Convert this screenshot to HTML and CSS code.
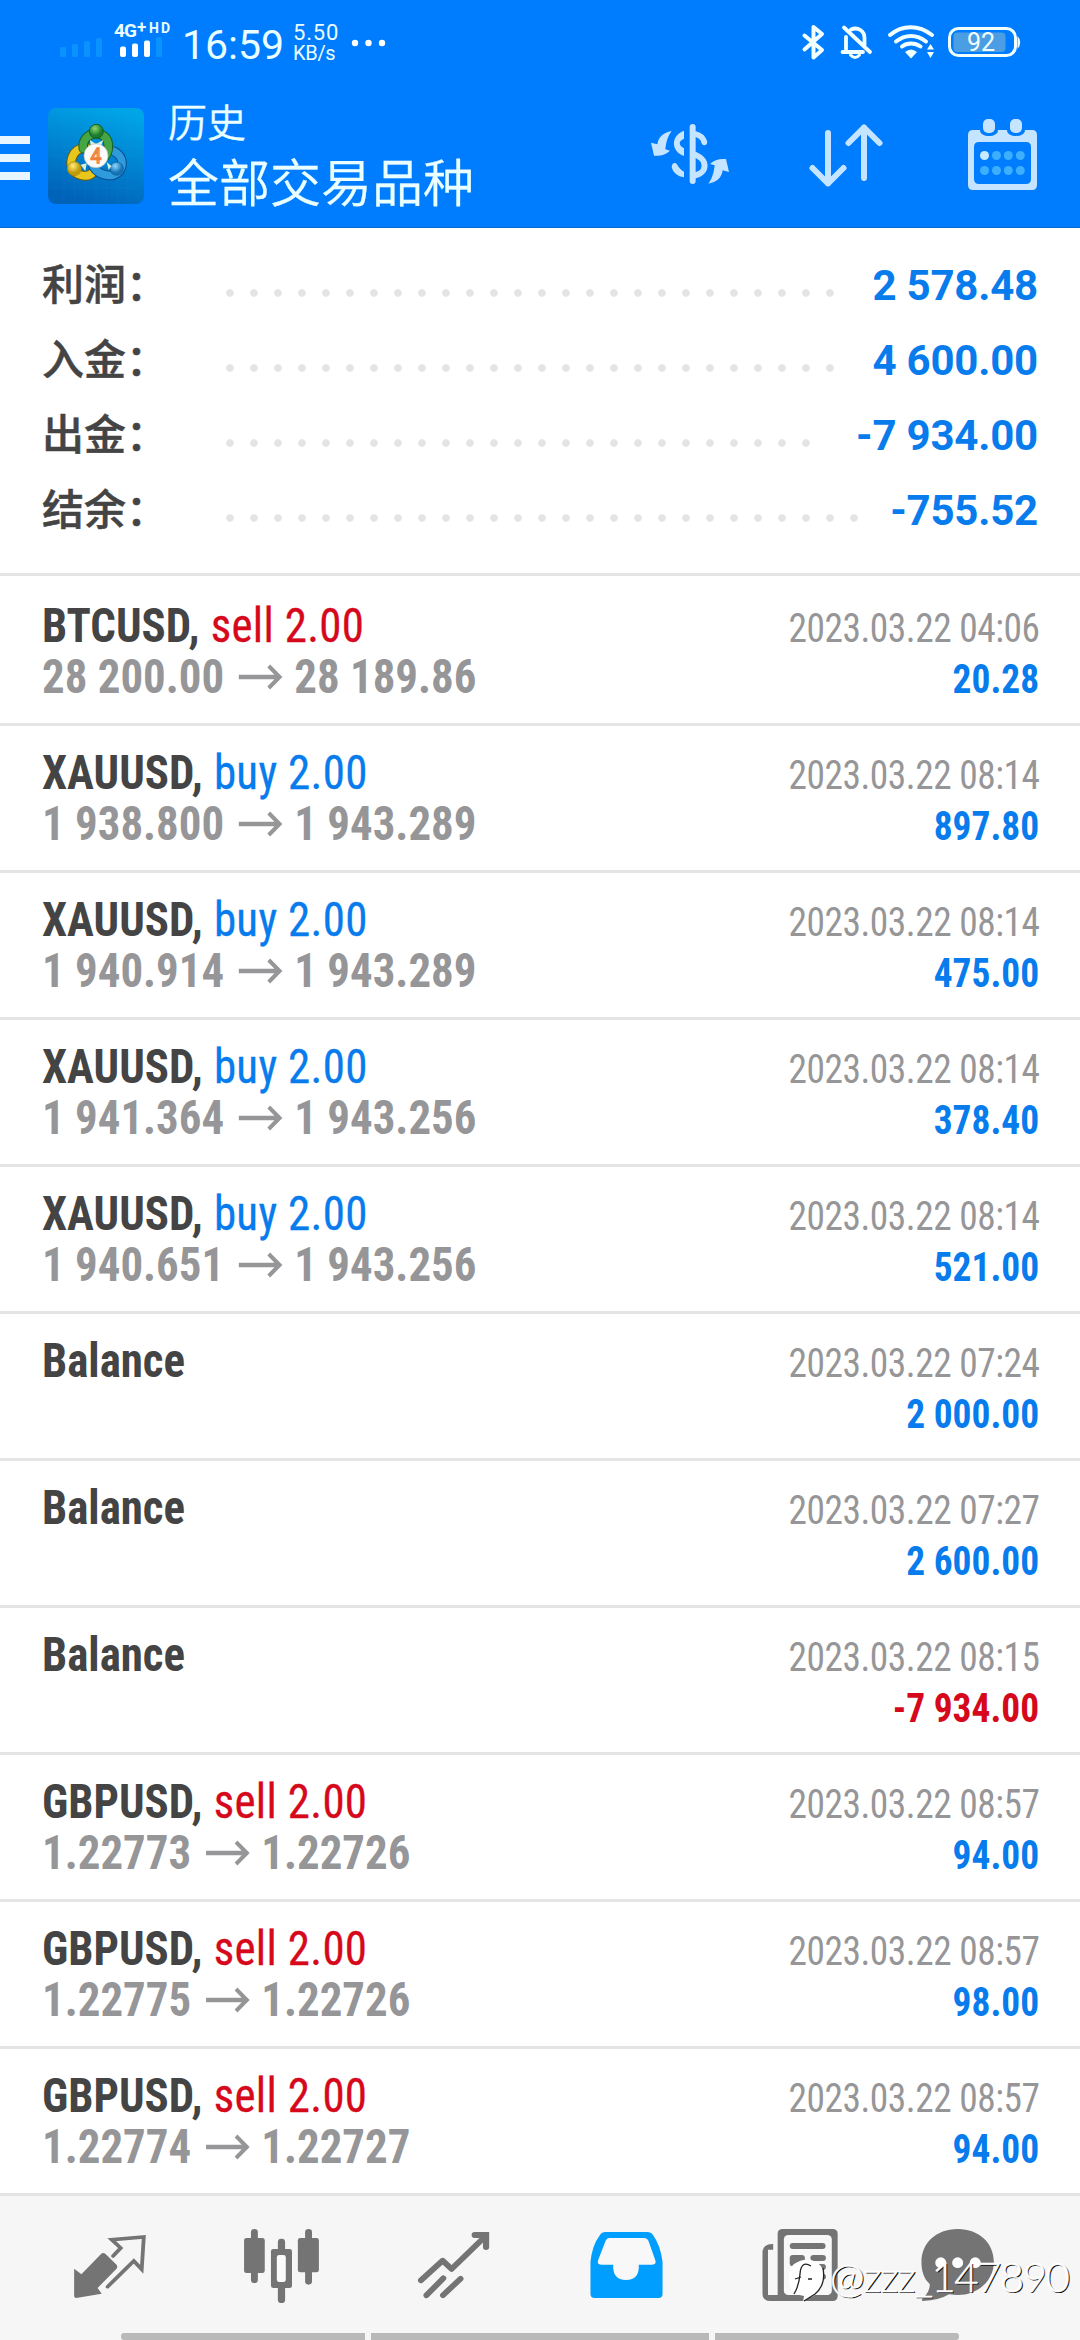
FILE: index.html
```
<!DOCTYPE html>
<html lang="zh-CN">
<head>
<meta charset="utf-8">
<title>历史</title>
<link rel="stylesheet" href="styles.css">
</head>
<body>
<svg class="defs" width="0" height="0">
  <symbol id="arrow" viewBox="0 0 46 26"><path d="M0 13H43M32 2L43.500 13L32 24" fill="none" stroke="#969698" stroke-width="4.300"/></symbol>
</svg>
<div class="screen">
<header class="header">
  <div class="status">
    <svg class="signal" width="120" height="50" viewBox="56 15 120 50">
      <g fill="#0a92ff"><rect x="60" y="47" width="6" height="10" rx="1.500"/><rect x="72" y="44" width="6" height="13" rx="1.500"/><rect x="84" y="41" width="6" height="16" rx="1.500"/><rect x="96" y="38" width="6" height="19" rx="1.500"/><rect x="156" y="37" width="6" height="20" rx="1.500"/></g>
      <g fill="#fff"><rect x="120" y="46.500" width="6" height="10.500" rx="2"/><rect x="132" y="43.500" width="6" height="13.500" rx="2"/><rect x="144" y="40.500" width="6" height="16.500" rx="2"/></g>
      <g class="net" fill="#eaffff"><text x="114" y="37" font-size="19" textLength="23">4G</text><text x="137" y="33" font-size="17">+</text><text x="149" y="32.500" font-size="14" textLength="21">HD</text></g>
    </svg>
    <span class="clock">16:59</span>
    <span class="speed"><span>5.50</span><span class="unit">KB/s</span></span>
    <svg class="more" width="36" height="8" viewBox="0 0 36 8"><g fill="#fff"><circle cx="4" cy="4" r="3.200"/><circle cx="17.500" cy="4" r="3.200"/><circle cx="31" cy="4" r="3.200"/></g></svg>
    <svg class="system" width="224" height="40" viewBox="800 22 224 40">
      <g fill="none" stroke="#f2ffff" stroke-linecap="round" stroke-linejoin="round">
        <path stroke-width="4" d="M804.500 35.500L822 50L813.500 57.500V27L822 34L804.500 49.500"/>
        <path stroke-width="3.800" d="M846 37V51M842.500 52H863M851 29.500C858 26.500 864.500 31 864.500 38V45M844 27.500L870 52"/>
        <path stroke-width="3" d="M850.500 55Q855 60 859.500 55"/>
        <path stroke-width="4" d="M890 35C902 24.500 919 24.500 932 35M896 41.500C905 34 917 34 926 41.500M902 46.500C907 42.500 915 42.500 920.500 46.500"/>
        <rect x="949.500" y="28.500" width="66" height="27" rx="9" stroke-width="3"/>
      </g>
      <path fill="#f2ffff" d="M905 52Q911 47 917 52L911 58.500ZM927 49.500L930.500 44L934 49.500ZM927 52L930.500 58L934 52ZM1017.500 36Q1023 42 1017.500 49Z"/>
      <rect x="953.500" y="32.500" width="52" height="19.500" rx="4" fill="#4c9ee4"/>
      <text x="967" y="51.300" font-size="25" fill="#f2ffff">92</text>
    </svg>
  </div>
  <div class="bar">
    <div class="menu"><i></i><i></i><i></i></div>
    <svg class="logo" width="96" height="96" viewBox="24 24 288 288">
      <defs>
        <linearGradient id="bg" x1=".7" y1="0" x2=".4" y2="1"><stop offset="0" stop-color="#00a5e8"/><stop offset=".5" stop-color="#0083d2"/><stop offset="1" stop-color="#0062b8"/></linearGradient>
        <radialGradient id="gr" cx=".4" cy=".3"><stop offset="0" stop-color="#8fd870"/><stop offset="1" stop-color="#1c7c2c"/></radialGradient>
        <radialGradient id="ye" cx=".4" cy=".3"><stop offset="0" stop-color="#fff07a"/><stop offset="1" stop-color="#c09a08"/></radialGradient>
        <radialGradient id="bl" cx=".4" cy=".3"><stop offset="0" stop-color="#8fd8ff"/><stop offset="1" stop-color="#1673b8"/></radialGradient>
      </defs>
      <rect x="24" y="24" width="288" height="288" rx="24" fill="url(#bg)"/>
      <path d="M72 24V312M104 24V312M136 24V312M168 24V312M200 24V312M232 24V312M264 24V312M24 72H312M24 104H312M24 136H312M24 168H312M24 200H312M24 232H312M24 264H312" stroke="#2aa6e8" stroke-opacity=".14" stroke-width="2"/>
      <g fill="none" stroke-linecap="round">
        <path d="M142 144C92 136 72 214 124 226C140 230 152 226 160 216" stroke="#6c5c0c" stroke-width="29"/>
        <path d="M142 144C92 136 72 214 124 226C140 230 152 226 160 216" stroke="#e8c61c" stroke-width="23"/>
        <path d="M222 154C264 176 246 232 204 226C184 224 168 214 160 200" stroke="#0b4f8d" stroke-width="29"/>
        <path d="M222 154C264 176 246 232 204 226C184 224 168 214 160 200" stroke="#2f9adc" stroke-width="23"/>
        <path d="M130 146C122 92 206 82 205 140C205 158 200 166 190 174" stroke="#14602a" stroke-width="29"/>
        <path d="M130 146C122 92 206 82 205 140C205 158 200 166 190 174" stroke="#46a444" stroke-width="23"/>
      </g>
      <circle cx="169" cy="94" r="21" fill="url(#gr)" stroke="#14602a" stroke-width="3"/><circle cx="103" cy="206" r="21" fill="url(#ye)" stroke="#a08410" stroke-width="2"/><circle cx="230" cy="206" r="20" fill="url(#bl)" stroke="#0b5f9d" stroke-width="2"/>
      <path d="M150 120L168 132L190 120L184 136H152ZM122 194L140 190L136 214ZM200 186L214 198L206 210Z" fill="#d8f0d8"/>
      <circle cx="168" cy="167" r="36" fill="#fafafa" stroke="#b8c0b8" stroke-width="2"/>
      <text x="168" y="188" font-size="58" text-anchor="middle" fill="#fff" stroke="#f08040" stroke-width="4">4</text>
    </svg>
    <div class="titles"><div class="sub">历史</div><div class="main">全部交易品种</div></div>
    <svg class="tool-cash" width="120" height="90" viewBox="0 0 360 270" fill="#c4e4ff">
      <rect x="149" y="42" width="18" height="180" rx="9"/>
      <path d="M132 62C92 76 92 124 132 138V115C114 104 116 93 132 86ZM95 63C70 68 55 80 52 103L33 98L42 137C60 138 75 136 90 122L76 118C78 100 82 80 95 63ZM205 221C230 216 245 204 248 181L267 186L258 147C240 146 225 148 210 162L224 166C222 184 218 204 205 221Z"/>
      <path d="M132 185V202C110 198 98 186 95 170Q97 156 108 160C115 168 118 178 132 185Z"/>
      <path d="M164 71Q187 76 193 96" fill="none" stroke="#c4e4ff" stroke-width="17"/><circle cx="193" cy="97" r="8.500"/>
      <path d="M160 132C208 148 202 192 160 197" fill="none" stroke="#c4e4ff" stroke-width="18"/>
    </svg>
    <svg class="tool-sort" width="80" height="80" viewBox="806 115 80 80" fill="none" stroke="#c4e4ff" stroke-width="6" stroke-linecap="round" stroke-linejoin="round"><path d="M828 133V183.500M812.500 168L828 183.500L843.500 168M864 178V127.500M848.500 143L864 127.500L879.500 143"/></svg>
    <svg class="tool-date" width="72" height="76" viewBox="967 117 72 76">
      <path fill="#c4e4ff" fill-rule="evenodd" d="M973 130H980C980 138 998 138 998 130H1007C1007 138 1025 138 1025 130H1032Q1037 130 1037 135V185Q1037 190 1032 190H973Q968 190 968 185V135Q968 130 973 130ZM979 142Q974 142 974 147V179Q974 184 979 184H1026Q1031 184 1031 179V147Q1031 142 1026 142Z"/>
      <g fill="#c4e4ff"><rect x="983" y="119" width="12" height="14" rx="5"/><rect x="1010" y="119" width="12" height="14" rx="5"/></g>
      <g fill="#3cb0ff"><circle cx="996.500" cy="155.500" r="4.500"/><circle cx="1008.300" cy="155.500" r="4.500"/><circle cx="1020.300" cy="155.500" r="4.500"/><circle cx="984.500" cy="170.500" r="4.500"/><circle cx="996.500" cy="170.500" r="4.500"/><circle cx="1008.300" cy="170.500" r="4.500"/><circle cx="1020.300" cy="170.500" r="4.500"/></g><circle cx="984.500" cy="155.500" r="4.500" fill="#c8ebff"/>
    </svg>
  </div>
</header>

<section class="summary">
  <div class="sum"><span class="label">利润：</span><span class="dots" style="width:624px"></span><span class="value">2 578.48</span></div>
  <div class="sum"><span class="label">入金：</span><span class="dots" style="width:624px"></span><span class="value">4 600.00</span></div>
  <div class="sum"><span class="label">出金：</span><span class="dots" style="width:600px"></span><span class="value">-7 934.00</span></div>
  <div class="sum"><span class="label">结余：</span><span class="dots" style="width:648px"></span><span class="value">-755.52</span></div>
</section>

<main class="deals">
  <article class="deal"><div class="left"><div><b>BTCUSD,</b> <span class="sell">sell 2.00</span></div><div class="prices">28 200.00<svg class="to"><use href="#arrow"/></svg>28 189.86</div></div><div class="right"><div class="time">2023.03.22 04:06</div><div class="profit">20.28</div></div></article>
  <article class="deal"><div class="left"><div><b>XAUUSD,</b> <span class="buy">buy 2.00</span></div><div class="prices">1 938.800<svg class="to"><use href="#arrow"/></svg>1 943.289</div></div><div class="right"><div class="time">2023.03.22 08:14</div><div class="profit">897.80</div></div></article>
  <article class="deal"><div class="left"><div><b>XAUUSD,</b> <span class="buy">buy 2.00</span></div><div class="prices">1 940.914<svg class="to"><use href="#arrow"/></svg>1 943.289</div></div><div class="right"><div class="time">2023.03.22 08:14</div><div class="profit">475.00</div></div></article>
  <article class="deal"><div class="left"><div><b>XAUUSD,</b> <span class="buy">buy 2.00</span></div><div class="prices">1 941.364<svg class="to"><use href="#arrow"/></svg>1 943.256</div></div><div class="right"><div class="time">2023.03.22 08:14</div><div class="profit">378.40</div></div></article>
  <article class="deal"><div class="left"><div><b>XAUUSD,</b> <span class="buy">buy 2.00</span></div><div class="prices">1 940.651<svg class="to"><use href="#arrow"/></svg>1 943.256</div></div><div class="right"><div class="time">2023.03.22 08:14</div><div class="profit">521.00</div></div></article>
  <article class="deal"><div class="left"><div><b>Balance</b></div></div><div class="right"><div class="time">2023.03.22 07:24</div><div class="profit">2 000.00</div></div></article>
  <article class="deal"><div class="left"><div><b>Balance</b></div></div><div class="right"><div class="time">2023.03.22 07:27</div><div class="profit">2 600.00</div></div></article>
  <article class="deal"><div class="left"><div><b>Balance</b></div></div><div class="right"><div class="time">2023.03.22 08:15</div><div class="profit loss">-7 934.00</div></div></article>
  <article class="deal"><div class="left"><div><b>GBPUSD,</b> <span class="sell">sell 2.00</span></div><div class="prices">1.22773<svg class="to"><use href="#arrow"/></svg>1.22726</div></div><div class="right"><div class="time">2023.03.22 08:57</div><div class="profit">94.00</div></div></article>
  <article class="deal"><div class="left"><div><b>GBPUSD,</b> <span class="sell">sell 2.00</span></div><div class="prices">1.22775<svg class="to"><use href="#arrow"/></svg>1.22726</div></div><div class="right"><div class="time">2023.03.22 08:57</div><div class="profit">98.00</div></div></article>
  <article class="deal"><div class="left"><div><b>GBPUSD,</b> <span class="sell">sell 2.00</span></div><div class="prices">1.22774<svg class="to"><use href="#arrow"/></svg>1.22727</div></div><div class="right"><div class="time">2023.03.22 08:57</div><div class="profit">94.00</div></div></article>
</main>

<nav class="tabs">
  <a><svg viewBox="203 135 232 240" preserveAspectRatio="none"><path fill="#747474" d="M215 266L236 283L293 222Q299 216 306 222L338 254Q342 260 338 266L283 324L295 341L221 354Q215 354 215 348Z"/><path fill="none" stroke="#747474" stroke-width="11" d="M328 228L350 204L324 179L417 171L411 268L388 243L312 320" stroke-linecap="round"/></svg></a>
  <a><svg viewBox="703 135 232 240" preserveAspectRatio="none"><g fill="#747474"><rect x="729" y="147" width="20" height="162" rx="10"/><rect x="709" y="174" width="60" height="105" rx="7"/><rect x="886" y="147" width="20" height="167" rx="10"/><rect x="865" y="174" width="61" height="103" rx="7"/><rect x="807" y="176" width="21" height="193" rx="10"/><rect x="787" y="207" width="61" height="117" rx="7"/></g><rect x="804" y="225" width="26" height="81" rx="7" fill="#fafafa"/></svg></a>
  <a><svg viewBox="1202 135 232 240" preserveAspectRatio="none"><path fill="none" stroke="#747474" stroke-width="17" stroke-linecap="round" stroke-linejoin="round" d="M1222 301L1285 242L1311 267L1406 172M1238 346L1287 295M1286 346L1337 296"/><path fill="none" stroke="#747474" stroke-width="18" stroke-linecap="round" stroke-linejoin="miter" d="M1378 165H1411V201"/></svg></a>
  <a><svg viewBox="134 135 232 240" preserveAspectRatio="none"><path fill="#009eff" d="M190 156H313Q323 156 328 164Q350 196 356 245V342Q356 354 344 354H159Q147 354 147 342V245Q152 196 174 166Q180 156 190 156Z"/><path fill="#f8f8f8" d="M201 174H303Q312 174 315 182L335 241Q339 254 326 254H287Q290 299 250 300Q210 299 213 254H178Q165 254 169 241L191 182Q194 174 201 174Z"/></svg></a>
  <a><svg viewBox="633 135 232 240" preserveAspectRatio="none"><path fill="#747474" fill-rule="evenodd" d="M705 147H849Q864 147 864 161V349Q864 363 849 363H670Q646 363 646 341V215Q648 191 677 192V209H662V345H690V161Q690 147 705 147Z"/><rect x="708" y="165" width="139" height="180" rx="13" fill="#f8f8f8"/><g fill="#747474"><rect x="725" y="189" width="104" height="18" rx="9"/><rect x="725" y="225" width="44" height="34" rx="9"/><rect x="785" y="225" width="45" height="18" rx="9"/><rect x="785" y="252" width="45" height="18" rx="9"/><rect x="785" y="281" width="45" height="18" rx="9"/></g></svg></a>
  <a class="chat"><svg viewBox="1098 135 232 240" preserveAspectRatio="none"><path fill="#747474" d="M1213 147C1276 147 1318 190 1318 246C1318 302 1272 345 1213 345Q1199 345 1188 343Q1160 361 1112 363Q1106 361 1112 355Q1133 335 1132 312C1114 295 1108 272 1108 246C1108 190 1150 147 1213 147Z"/><g fill="#fff"><circle cx="1164" cy="248" r="16"/><circle cx="1213" cy="248" r="16"/><circle cx="1264" cy="248" r="16"/></g></svg></a>
</nav>
<div class="gesture"><i></i><i class="mid"></i><i></i></div>

<svg class="watermark" width="290" height="60" viewBox="785 2250 290 60">
  <path fill="#fff" d="M794 2264Q806 2256 818 2263Q826 2270 823 2282Q821 2294 809 2298L803 2302L804 2296Q790 2294 789 2280Q788 2269 794 2264Z"/>
  <path fill="none" stroke="#222" stroke-width="1.300" d="M811 2266Q801 2260 800 2274Q799 2286 794 2294M795 2279L801 2277M808 2279H812M823 2268Q826 2285 815 2294L804 2301"/>
  <g class="mark-text"><text x="831" y="2293" textLength="240" fill="#111">@zzz_147890</text><text x="829.800" y="2292" textLength="240" fill="#fff" stroke="#fff" stroke-width=".5">@zzz_147890</text></g>
</svg>
</div>
</body>
</html>
```
FILE: styles.css
```
* { box-sizing: border-box; }
body { margin: 0; font-family: Roboto, "Noto Sans CJK SC", sans-serif; background: #fff; }
.defs { position: absolute; }
.screen { position: relative; width: 1080px; height: 2340px; display: flex; flex-direction: column; overflow: hidden; }
svg { display: block; flex: none; }

.header { height: 228px; background: #007cff; border-bottom: 1px solid #0a68cc; color: #eaffff; }
.status { height: 84px; display: flex; padding-left: 56px; }
.signal { margin-top: 15px; }
.net { font-weight: 700; }
.clock { font-size: 41px; line-height: 48px; margin: 21px 0 0 6px; width: 102px; }
.speed { display: flex; flex-direction: column; width: 50px; margin: 23px 0 0 9px; font-size: 22px; line-height: 20px; letter-spacing: 0.8px; }
.unit { font-size: 20px; letter-spacing: -0.3px; }
.more { margin: 39px 0 0 8px; }
.system { margin: 22px 0 0 413px; }

.bar { height: 143px; display: flex; }
.menu { width: 30px; height: 44px; margin-top: 52px; display: flex; flex-direction: column; gap: 10px; }
.menu i { height: 8px; background: #e8f6ff; }
.logo { margin: 24px 0 0 18px; }
.titles { margin: 6px 0 0 24px; width: 310px; font-family: "Noto Sans CJK SC", sans-serif; font-weight: 350; -webkit-text-stroke: 0.3px currentColor; }
.sub { font-size: 39px; line-height: 60px; }
.main { font-size: 51px; line-height: 60px; white-space: nowrap; }
.tool-cash { margin: 26px 0 0 162px; }
.tool-sort { margin: 31px 0 0 46px; }
.tool-date { margin: 33px 0 0 81px; }

.summary { height: 348px; padding: 17px 42px 0 42px; border-bottom: 3px solid #e4e4e4; }
.sum { height: 75px; display: flex; align-items: center; }
.label { width: 176px; height: 77px; color: #444; font: 500 42px/75px "Noto Sans CJK SC", sans-serif; -webkit-text-stroke: 0.5px #444; }
.dots { height: 8px; margin-top: 20px; background: radial-gradient(circle, #e4e4e6 3.4px, transparent 4.2px) 0 0 / 24px 8px; }
.value { margin-left: auto; color: #087cec; font-size: 42px; font-weight: 700; line-height: 75px; white-space: nowrap; margin-top: 6px; letter-spacing: -0.2px; }

.deals { padding-top: 3px; }
.deal { height: 147px; border-bottom: 3px solid #e4e4e4; padding: 21px 41px 0 42px; display: flex; justify-content: space-between; font-family: "Roboto Condensed", Roboto, sans-serif; font-stretch: 75%; white-space: nowrap; }
.left { font-size: 48px; line-height: 51px; transform: scaleX(.935); transform-origin: left; color: #444; }
.right { font-size: 40px; line-height: 51px; margin-top: 3px; text-align: right; transform: scaleX(.935); transform-origin: right; }
.prices { display: flex; font-weight: 700; color: #969698; }
.to { width: 49px; height: 26px; margin: 13px 12px 0 14px; }
.buy, .sell { letter-spacing: 0.35px; margin-left: 1px; -webkit-text-stroke: 0.3px currentColor; }
.buy { color: #087cec; }
.sell { color: #d6081c; }
.time { color: #969698; letter-spacing: -0.5px; margin-right: -0.5px; }
.profit { font-weight: 700; color: #087cec; }
.loss { color: #d6081c; }

.tabs { height: 137px; background: #f6f6f6; padding: 29px 0 0 24px; display: flex; }
.tabs a { width: 172px; display: flex; justify-content: center; }
.tabs .chat { width: 148px; }
.tabs svg { width: 80px; height: 80px; }
.gesture { height: 7px; background: #f6f6f6; padding: 0 121px; display: flex; gap: 6px; }
.gesture i { width: 244px; background: #b9b9b9; border-radius: 3px 0 0 3px; }
.gesture .mid { width: 338px; border-radius: 0; }
.gesture i:last-child { border-radius: 0 3px 3px 0; }

.watermark { position: absolute; left: 785px; top: 2250px; }
.mark-text { font-family: Lato, sans-serif; font-weight: 300; font-size: 42px; }
```
